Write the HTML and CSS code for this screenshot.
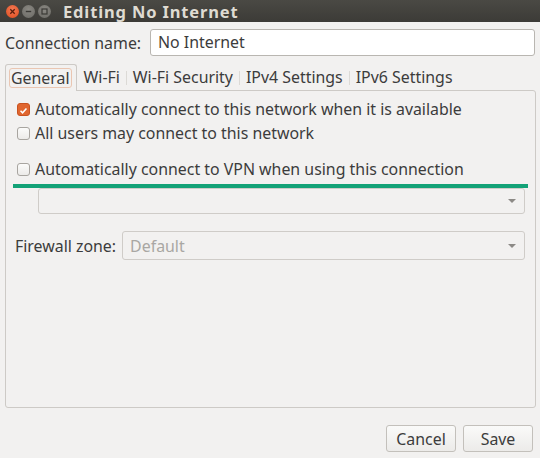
FILE: index.html
```html
<!DOCTYPE html>
<html>
<head>
<meta charset="utf-8">
<link rel="stylesheet" href="styles.css">
</head>
<body>
<div class="window">
  <div class="titlebar">
    <div class="wbtns">
      <span class="wbtn close"><svg width="13" height="13" viewBox="0 0 13 13"><path d="M4.3 4.3l4.4 4.4M8.7 4.3l-4.4 4.4" stroke="#5a1e0c" stroke-width="1.3"/></svg></span>
      <span class="wbtn"><svg width="13" height="13" viewBox="0 0 13 13"><path d="M3.8 6.5h5.4" stroke="#3a3935" stroke-width="1.4"/></svg></span>
      <span class="wbtn"><svg width="13" height="13" viewBox="0 0 13 13"><rect x="4" y="4" width="5" height="5" fill="none" stroke="#3a3935" stroke-width="1.2"/></svg></span>
    </div>
    <div class="title">Editing No Internet</div>
  </div>
  <div class="content">
    <div class="name-row">
      <span class="label">Connection name:</span>
      <div class="entry">No Internet</div>
    </div>
    <div class="tabs">
      <div class="tab active"><span class="focus">General</span></div>
      <div class="tab">Wi-Fi</div>
      <div class="tab">Wi-Fi Security</div>
      <div class="tab">IPv4 Settings</div>
      <div class="tab">IPv6 Settings</div>
    </div>
    <div class="panel">
      <div class="check-row"><span class="cb checked"><svg width="13" height="13" viewBox="0 0 13 13"><path d="M3 6.8l2.4 2.4 4.6-5" fill="none" stroke="#fff" stroke-width="1.8"/></svg></span><span>Automatically connect to this network when it is available</span></div>
      <div class="check-row"><span class="cb"></span><span>All users may connect to this network</span></div>
      <div class="check-row vpn"><span class="cb"></span><span>Automatically connect to VPN when using this connection</span></div>
      <div class="highlight"></div>
      <div class="combo vpn-combo"><span></span><span class="arrow"></span></div>
      <div class="fw-row">
        <span class="label">Firewall zone:</span>
        <div class="combo fw-combo"><span class="combo-text">Default</span><span class="arrow"></span></div>
      </div>
    </div>
    <div class="buttons">
      <button class="btn">Cancel</button>
      <button class="btn">Save</button>
    </div>
  </div>
</div>
</body>
</html>
```
FILE: styles.css
```css
* { box-sizing: border-box; }
html, body { margin: 0; padding: 0; }
body {
  width: 540px;
  height: 458px;
  background: #f2f1f0;
  font-family: "Noto Sans", "Open Sans", sans-serif;
  font-size: 15.9px;
  color: #3c3c3c;
  overflow: hidden;
}
.titlebar {
  height: 22px;
  background: linear-gradient(#4a4944, #3c3b37);
  display: flex;
  align-items: center;
  padding-left: 6px;
}
.wbtns { display: flex; gap: 3px; }
.wbtn {
  width: 13px; height: 13px; border-radius: 50%;
  background: radial-gradient(circle at 50% 35%, #8a8882, #6a6964);
  display: flex;
}
.wbtn.close { background: radial-gradient(circle at 50% 35%, #f47a55, #de4b1c); }
.title {
  margin-left: 12px;
  color: #dfdbd2;
  font-weight: bold;
  font-size: 16.5px;
  letter-spacing: 0.85px;
}
.content { padding: 7px 5px 0 5px; }
.name-row { display: flex; align-items: center; height: 27px; }
.label { color: #3c3c3c; }
.entry {
  margin-left: auto;
  width: 385px; height: 27px;
  background: #fff;
  border: 1px solid #b9b6b1;
  border-radius: 3px;
  padding: 0 7px;
  line-height: 25px;
  color: #3c3c3c;
}
.tabs {
  display: flex;
  margin-top: 8px;
  height: 26px;
  align-items: stretch;
}
.tab {
  padding: 0 6.5px;
  display: flex; align-items: center;
  position: relative;
}
.tab + .tab::before {
  content: ""; position: absolute; left: 0; top: 7px; bottom: 5px;
  width: 1px; background: #dcdad6;
}
.tab.active + .tab::before { display: none; }
.tab.active {
  border: 1px solid #cdcac6;
  border-bottom: none;
  border-radius: 3px 3px 0 0;
  padding: 0 3px;
  background: #f2f1f0;
  margin-bottom: -1px;
  z-index: 1;
  width: 72px;
}
.focus {
  border: 1px solid #eac6b2;
  border-radius: 3px;
  padding: 0 1px;
  line-height: 18px;
}
.panel {
  height: 318px;
  width: 531px;
  border: 1px solid #cdcac6;
  border-radius: 0 3px 3px 3px;
  padding: 6px 10px 0 11px;
}
.check-row {
  display: flex; align-items: center; height: 24px; gap: 5px;
}
.check-row.vpn { margin-top: 12px; }
.cb {
  width: 13px; height: 13px;
  border: 1px solid #a8a5a0;
  border-radius: 3px;
  background: linear-gradient(#fbfbfa, #ecebe9);
  display: flex;
  flex: none;
}
.cb.checked { background: #e0662f; border-color: #c9521f; }
.highlight {
  height: 4px;
  background: #13a277;
  width: 515px;
  margin: 3px 0 0 -4px;
}
.combo {
  height: 26px;
  border: 1px solid #cfccc8;
  border-radius: 3px;
  background: #f2f1f0;
  display: flex; align-items: center; justify-content: space-between;
  padding: 0 8px 0 7px;
}
.vpn-combo { margin: 0 0 0 21px; }
.arrow {
  width: 0; height: 0;
  border-left: 4px solid transparent;
  border-right: 4px solid transparent;
  border-top: 4px solid #8c8a86;
}
.fw-row { display: flex; align-items: center; margin-top: 17px; margin-left: -2px; gap: 6px; }
.fw-combo { flex: 1; height: 29px; }
.combo-text { color: #a9a7a3; }
.buttons {
  display: flex; justify-content: flex-end; gap: 7px;
  margin-top: 17px; padding-right: 2px;
}
.btn {
  font: inherit;
  color: #3c3c3c;
  width: 70px; height: 27px;
  border: 1px solid #c3c0bb;
  border-radius: 3px;
  background: linear-gradient(#fafaf9, #ecebe9);
  padding: 0;
}
```
